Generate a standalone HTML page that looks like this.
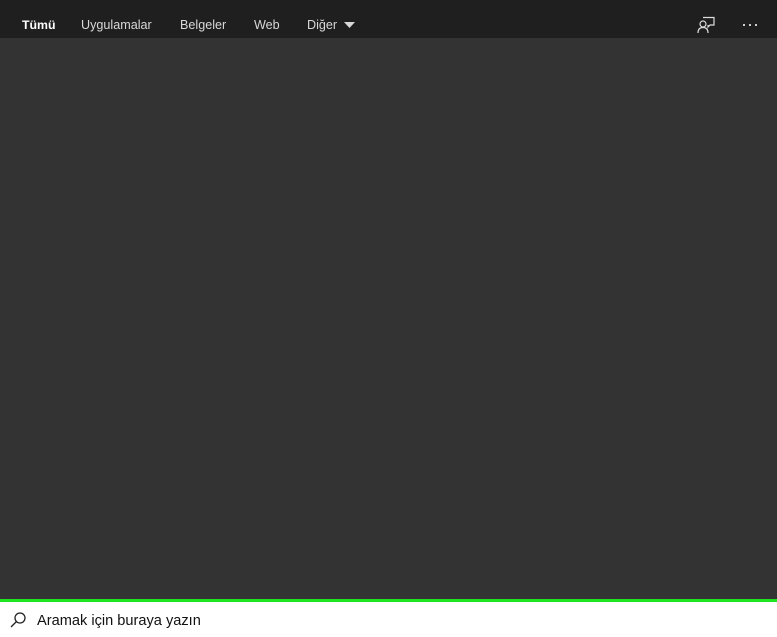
<!DOCTYPE html>
<html><head><style>
body{margin:0;width:777px;height:637px;background:#333;font-family:"Liberation Sans",sans-serif;position:relative;overflow:hidden}
.top{position:absolute;left:0;top:0;width:777px;height:38px;background:#1f1f1f}
.t{position:absolute;top:18px;font-size:12.6px;color:#d8d8d8}
.bot{position:absolute;left:0;top:599px;width:777px;height:38px;background:#fff;border-top:3px solid #1ee61e;box-sizing:border-box}
</style></head><body>
<div class="top">
<span class="t" style="left:22px;color:#fff;font-weight:bold;font-size:12.3px">Tümü</span>
<span class="t" style="left:81px">Uygulamalar</span>
<span class="t" style="left:180px">Belgeler</span>
<span class="t" style="left:254px">Web</span>
<span class="t" style="left:307px">Diğer</span>
<svg style="position:absolute;left:344px;top:22px" width="11" height="6"><path d="M0 0H11L5.5 6Z" fill="#d8d8d8"/></svg>
<svg style="position:absolute;left:697px;top:15px" width="20" height="18" fill="none" stroke="#ddd" stroke-width="1.2"><path d="M6 2.5H17V10H13L11 12V10"/><circle cx="6" cy="9" r="3"/><path d="M1 18C1 14 3 12.5 6 12.5S11 14 11 18"/></svg>
<span style="position:absolute;left:741px;top:24px;width:16px;height:2px;background:radial-gradient(circle,#ddd 1px,transparent 1.2px) 0 0/6px 2px"></span>
</div>
<div class="bot">
<svg style="position:absolute;left:10px;top:10px" width="16" height="16" fill="none" stroke="#222" stroke-width="1.3"><circle cx="10" cy="6" r="5"/><path d="M6.5 9.5L1 15"/></svg>
<span style="position:absolute;left:37px;top:11px;font-size:14.6px;color:#111">Aramak için buraya yazın</span>
</div>
</body></html>
